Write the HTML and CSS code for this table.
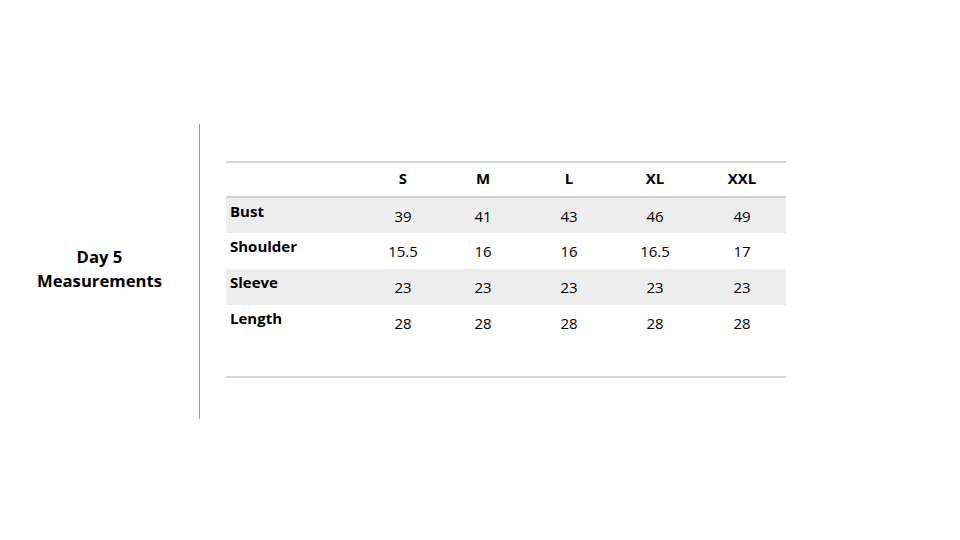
FILE: index.html
```html
<!DOCTYPE html>
<html>
<head>
<meta charset="utf-8">
<link rel="stylesheet" href="styles.css">
</head>
<body>
<div class="slide">
  <div class="title-area">
    <h1 class="title">Day 5<br>Measurements</h1>
  </div>
  <div class="divider"></div>
  <div class="table-area">
    <table class="sizes">
      <colgroup>
        <col class="c-label"><col class="c-s"><col class="c-m"><col class="c-l"><col class="c-xl"><col class="c-xxl">
      </colgroup>
      <thead>
        <tr><th></th><th>S</th><th>M</th><th>L</th><th>XL</th><th>XXL</th></tr>
      </thead>
      <tbody>
        <tr class="shade"><td class="label">Bust</td><td>39</td><td>41</td><td>43</td><td>46</td><td>49</td></tr>
        <tr><td class="label">Shoulder</td><td>15.5</td><td>16</td><td>16</td><td>16.5</td><td>17</td></tr>
        <tr class="shade"><td class="label">Sleeve</td><td>23</td><td>23</td><td>23</td><td>23</td><td>23</td></tr>
        <tr><td class="label">Length</td><td>28</td><td>28</td><td>28</td><td>28</td><td>28</td></tr>
        <tr class="empty"><td></td><td></td><td></td><td></td><td></td><td></td></tr>
      </tbody>
    </table>
  </div>
</div>
</body>
</html>
```
FILE: styles.css
```css
html, body {
  margin: 0;
  padding: 0;
  background: #ffffff;
}
body {
  width: 960px;
  height: 540px;
  overflow: hidden;
  font-family: "Open Sans", "Liberation Sans", sans-serif;
  color: #000000;
}
.slide {
  display: flex;
  align-items: flex-start;
  padding-top: 124px;
}
.title-area {
  width: 199px;
  height: 295px;
  display: flex;
  align-items: center;
  justify-content: center;
}
.title {
  margin: 0 0 6px 0;
  font-size: 16.7px;
  line-height: 24px;
  font-weight: 700;
  text-align: center;
}
.divider {
  width: 1px;
  height: 295px;
  background: #c38e7c;
}
.table-area {
  padding-left: 26px;
  padding-top: 37px;
}
.sizes {
  border-collapse: collapse;
  table-layout: fixed;
  width: 560px;
  font-size: 15px;
  line-height: 20px;
  border-top: 2px solid #d6d6d6;
  border-bottom: 2px solid #d6d6d6;
}
.c-label { width: 140px; }
.c-s { width: 74px; }
.c-m { width: 86px; }
.c-l { width: 86px; }
.c-xl { width: 86px; }
.c-xxl { width: 88px; }
.sizes thead tr {
  height: 35px;
}
.sizes tbody tr {
  height: 36px;
}
.sizes th {
  padding: 0 0 3px 0;
  font-weight: 700;
  text-align: center;
  vertical-align: middle;
  border-bottom: 2px solid #cfcfcf;
}
.sizes td {
  padding: 0;
  text-align: center;
  vertical-align: middle;
}
.sizes td.label {
  text-align: left;
  vertical-align: top;
  padding: 3px 0 0 4px;
  font-weight: 700;
}
.sizes tr.shade td {
  background: #ededed;
}
```
